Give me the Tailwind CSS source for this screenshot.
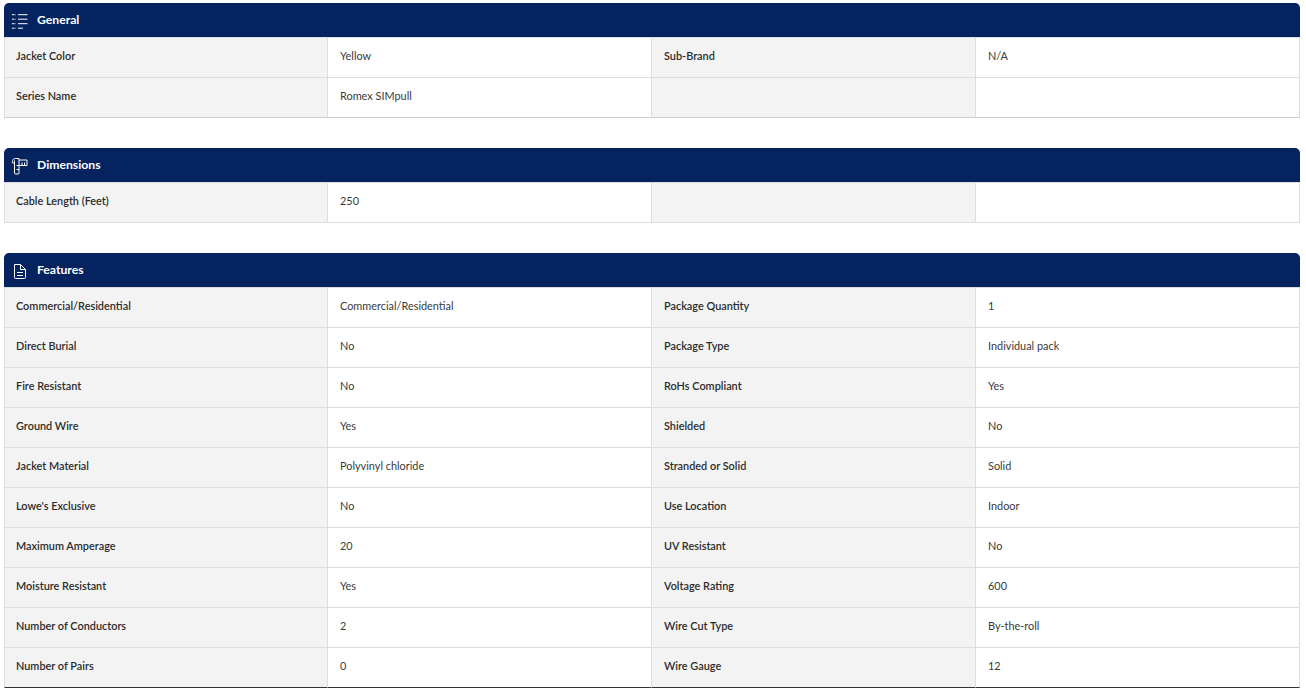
<!DOCTYPE html>
<html lang="en">
<head>
<meta charset="UTF-8">
<title>Specifications</title>
<script src="https://cdn.jsdelivr.net/npm/@tailwindcss/browser@4"></script>
</head>
<body class="bg-white h-[692px] overflow-hidden font-['Lato',sans-serif] text-[10.9px] text-[#3a3a3a]">
<div class="pt-[3px] pl-1 w-[1300px]">

  <section class="mb-[30px]">
    <h2 class="h-[34px] flex items-center bg-[#04235f] rounded-t-[5px] text-white font-bold text-[12.2px]">
      <svg class="w-5 h-5 ml-[6px] mr-[7px]" viewBox="0 0 20 20" fill="none" stroke="white" stroke-width="1"><path d="M8 4.700h9.500M8 9.200h9.500M8 13.700h9.500M8 18.200h5"/><path stroke-dasharray="2.500 1" d="M2 4.700h4M2 9.200h4M2 13.700h4M2 18.200h4"/></svg>
      General
    </h2>
    <div class="grid grid-cols-4 border-t border-[#ddd]">
      <div class="h-10 flex items-center pb-[2px] pl-[11px] bg-[#f3f3f3] border-l border-r border-b border-[#ddd] text-[#2b2b2b] font-semibold">Jacket Color</div>
      <div class="h-10 flex items-center pb-[2px] pl-3 border-r border-b border-[#ddd]">Yellow</div>
      <div class="h-10 flex items-center pb-[2px] pl-3 bg-[#f3f3f3] border-r border-b border-[#ddd] text-[#2b2b2b] font-semibold">Sub-Brand</div>
      <div class="h-10 flex items-center pb-[2px] pl-3 border-r border-b border-[#ddd]">N/A</div>
      <div class="h-10 flex items-center pb-[2px] pl-[11px] bg-[#f3f3f3] border-l border-r border-b border-[#ddd] border-b-[#ccc] text-[#2b2b2b] font-semibold">Series Name</div>
      <div class="h-10 flex items-center pb-[2px] pl-3 border-r border-b border-[#ddd] border-b-[#ccc]">Romex SIMpull</div>
      <div class="h-10 flex items-center pb-[2px] pl-3 bg-[#f3f3f3] border-r border-b border-[#ddd] border-b-[#ccc] text-[#2b2b2b] font-semibold"></div>
      <div class="h-10 flex items-center pb-[2px] pl-3 border-r border-b border-[#ddd] border-b-[#ccc]"></div>
    </div>
  </section>

  <section class="mb-[30px]">
    <h2 class="h-[34px] flex items-center bg-[#04235f] rounded-t-[5px] text-white font-bold text-[12.2px]">
      <svg class="w-5 h-5 ml-[6px] mr-[7px]" viewBox="0 0 20 20" fill="none" stroke="white" stroke-width="1"><path d="M9 5h8v5.500H9M9 3.500H5.500C3.500 3.500 2.500 4.700 2.500 6.500v1.500H4.500M4.500 5.500V18a1 1 0 0 0 1 1H8a1 1 0 0 0 1-1V3.500M12 7.500v3M14.500 7.500v3M6.500 10.500h2.500M6.500 14.500h2.500"/></svg>
      Dimensions
    </h2>
    <div class="grid grid-cols-4 border-t border-[#ddd]">
      <div class="h-10 flex items-center pb-[2px] pl-[11px] bg-[#f3f3f3] border-l border-r border-b border-[#ddd] text-[#2b2b2b] font-semibold">Cable Length (Feet)</div>
      <div class="h-10 flex items-center pb-[2px] pl-3 border-r border-b border-[#ddd]">250</div>
      <div class="h-10 flex items-center pb-[2px] pl-3 bg-[#f3f3f3] border-r border-b border-[#ddd] text-[#2b2b2b] font-semibold"></div>
      <div class="h-10 flex items-center pb-[2px] pl-3 border-r border-b border-[#ddd]"></div>
    </div>
  </section>

  <section>
    <h2 class="h-[34px] flex items-center bg-[#04235f] rounded-t-[5px] text-white font-bold text-[12.2px]">
      <svg class="w-5 h-5 ml-[6px] mr-[7px]" viewBox="0 0 20 20" fill="none" stroke="white" stroke-width="1"><path d="M4.500 4.500h6L15.500 9.500v8a1 1 0 0 1-1 1h-9a1 1 0 0 1-1-1zM10.500 4.500v5h5M7 12.500h6M7 15.500h6"/></svg>
      Features
    </h2>
    <div class="grid grid-cols-4 border-t border-[#ddd]">
      <div class="h-10 flex items-center pb-[2px] pl-[11px] bg-[#f3f3f3] border-l border-r border-b border-[#ddd] text-[#2b2b2b] font-semibold">Commercial/Residential</div>
      <div class="h-10 flex items-center pb-[2px] pl-3 border-r border-b border-[#ddd]">Commercial/Residential</div>
      <div class="h-10 flex items-center pb-[2px] pl-3 bg-[#f3f3f3] border-r border-b border-[#ddd] text-[#2b2b2b] font-semibold">Package Quantity</div>
      <div class="h-10 flex items-center pb-[2px] pl-3 border-r border-b border-[#ddd]">1</div>
      <div class="h-10 flex items-center pb-[2px] pl-[11px] bg-[#f3f3f3] border-l border-r border-b border-[#ddd] text-[#2b2b2b] font-semibold">Direct Burial</div>
      <div class="h-10 flex items-center pb-[2px] pl-3 border-r border-b border-[#ddd]">No</div>
      <div class="h-10 flex items-center pb-[2px] pl-3 bg-[#f3f3f3] border-r border-b border-[#ddd] text-[#2b2b2b] font-semibold">Package Type</div>
      <div class="h-10 flex items-center pb-[2px] pl-3 border-r border-b border-[#ddd]">Individual pack</div>
      <div class="h-10 flex items-center pb-[2px] pl-[11px] bg-[#f3f3f3] border-l border-r border-b border-[#ddd] text-[#2b2b2b] font-semibold">Fire Resistant</div>
      <div class="h-10 flex items-center pb-[2px] pl-3 border-r border-b border-[#ddd]">No</div>
      <div class="h-10 flex items-center pb-[2px] pl-3 bg-[#f3f3f3] border-r border-b border-[#ddd] text-[#2b2b2b] font-semibold">RoHs Compliant</div>
      <div class="h-10 flex items-center pb-[2px] pl-3 border-r border-b border-[#ddd]">Yes</div>
      <div class="h-10 flex items-center pb-[2px] pl-[11px] bg-[#f3f3f3] border-l border-r border-b border-[#ddd] text-[#2b2b2b] font-semibold">Ground Wire</div>
      <div class="h-10 flex items-center pb-[2px] pl-3 border-r border-b border-[#ddd]">Yes</div>
      <div class="h-10 flex items-center pb-[2px] pl-3 bg-[#f3f3f3] border-r border-b border-[#ddd] text-[#2b2b2b] font-semibold">Shielded</div>
      <div class="h-10 flex items-center pb-[2px] pl-3 border-r border-b border-[#ddd]">No</div>
      <div class="h-10 flex items-center pb-[2px] pl-[11px] bg-[#f3f3f3] border-l border-r border-b border-[#ddd] text-[#2b2b2b] font-semibold">Jacket Material</div>
      <div class="h-10 flex items-center pb-[2px] pl-3 border-r border-b border-[#ddd]">Polyvinyl chloride</div>
      <div class="h-10 flex items-center pb-[2px] pl-3 bg-[#f3f3f3] border-r border-b border-[#ddd] text-[#2b2b2b] font-semibold">Stranded or Solid</div>
      <div class="h-10 flex items-center pb-[2px] pl-3 border-r border-b border-[#ddd]">Solid</div>
      <div class="h-10 flex items-center pb-[2px] pl-[11px] bg-[#f3f3f3] border-l border-r border-b border-[#ddd] text-[#2b2b2b] font-semibold">Lowe's Exclusive</div>
      <div class="h-10 flex items-center pb-[2px] pl-3 border-r border-b border-[#ddd]">No</div>
      <div class="h-10 flex items-center pb-[2px] pl-3 bg-[#f3f3f3] border-r border-b border-[#ddd] text-[#2b2b2b] font-semibold">Use Location</div>
      <div class="h-10 flex items-center pb-[2px] pl-3 border-r border-b border-[#ddd]">Indoor</div>
      <div class="h-10 flex items-center pb-[2px] pl-[11px] bg-[#f3f3f3] border-l border-r border-b border-[#ddd] text-[#2b2b2b] font-semibold">Maximum Amperage</div>
      <div class="h-10 flex items-center pb-[2px] pl-3 border-r border-b border-[#ddd]">20</div>
      <div class="h-10 flex items-center pb-[2px] pl-3 bg-[#f3f3f3] border-r border-b border-[#ddd] text-[#2b2b2b] font-semibold">UV Resistant</div>
      <div class="h-10 flex items-center pb-[2px] pl-3 border-r border-b border-[#ddd]">No</div>
      <div class="h-10 flex items-center pb-[2px] pl-[11px] bg-[#f3f3f3] border-l border-r border-b border-[#ddd] text-[#2b2b2b] font-semibold">Moisture Resistant</div>
      <div class="h-10 flex items-center pb-[2px] pl-3 border-r border-b border-[#ddd]">Yes</div>
      <div class="h-10 flex items-center pb-[2px] pl-3 bg-[#f3f3f3] border-r border-b border-[#ddd] text-[#2b2b2b] font-semibold">Voltage Rating</div>
      <div class="h-10 flex items-center pb-[2px] pl-3 border-r border-b border-[#ddd]">600</div>
      <div class="h-10 flex items-center pb-[2px] pl-[11px] bg-[#f3f3f3] border-l border-r border-b border-[#ddd] text-[#2b2b2b] font-semibold">Number of Conductors</div>
      <div class="h-10 flex items-center pb-[2px] pl-3 border-r border-b border-[#ddd]">2</div>
      <div class="h-10 flex items-center pb-[2px] pl-3 bg-[#f3f3f3] border-r border-b border-[#ddd] text-[#2b2b2b] font-semibold">Wire Cut Type</div>
      <div class="h-10 flex items-center pb-[2px] pl-3 border-r border-b border-[#ddd]">By-the-roll</div>
      <div class="h-10 flex items-center pb-[2px] pl-[11px] bg-[#f3f3f3] border-l border-r border-b border-[#ddd] border-b-[#333] text-[#2b2b2b] font-semibold">Number of Pairs</div>
      <div class="h-10 flex items-center pb-[2px] pl-3 border-r border-b border-[#ddd] border-b-[#333]">0</div>
      <div class="h-10 flex items-center pb-[2px] pl-3 bg-[#f3f3f3] border-r border-b border-[#ddd] border-b-[#333] text-[#2b2b2b] font-semibold">Wire Gauge</div>
      <div class="h-10 flex items-center pb-[2px] pl-3 border-r border-b border-[#ddd] border-b-[#333]">12</div>
    </div>
  </section>

</div>
</body>
</html>
